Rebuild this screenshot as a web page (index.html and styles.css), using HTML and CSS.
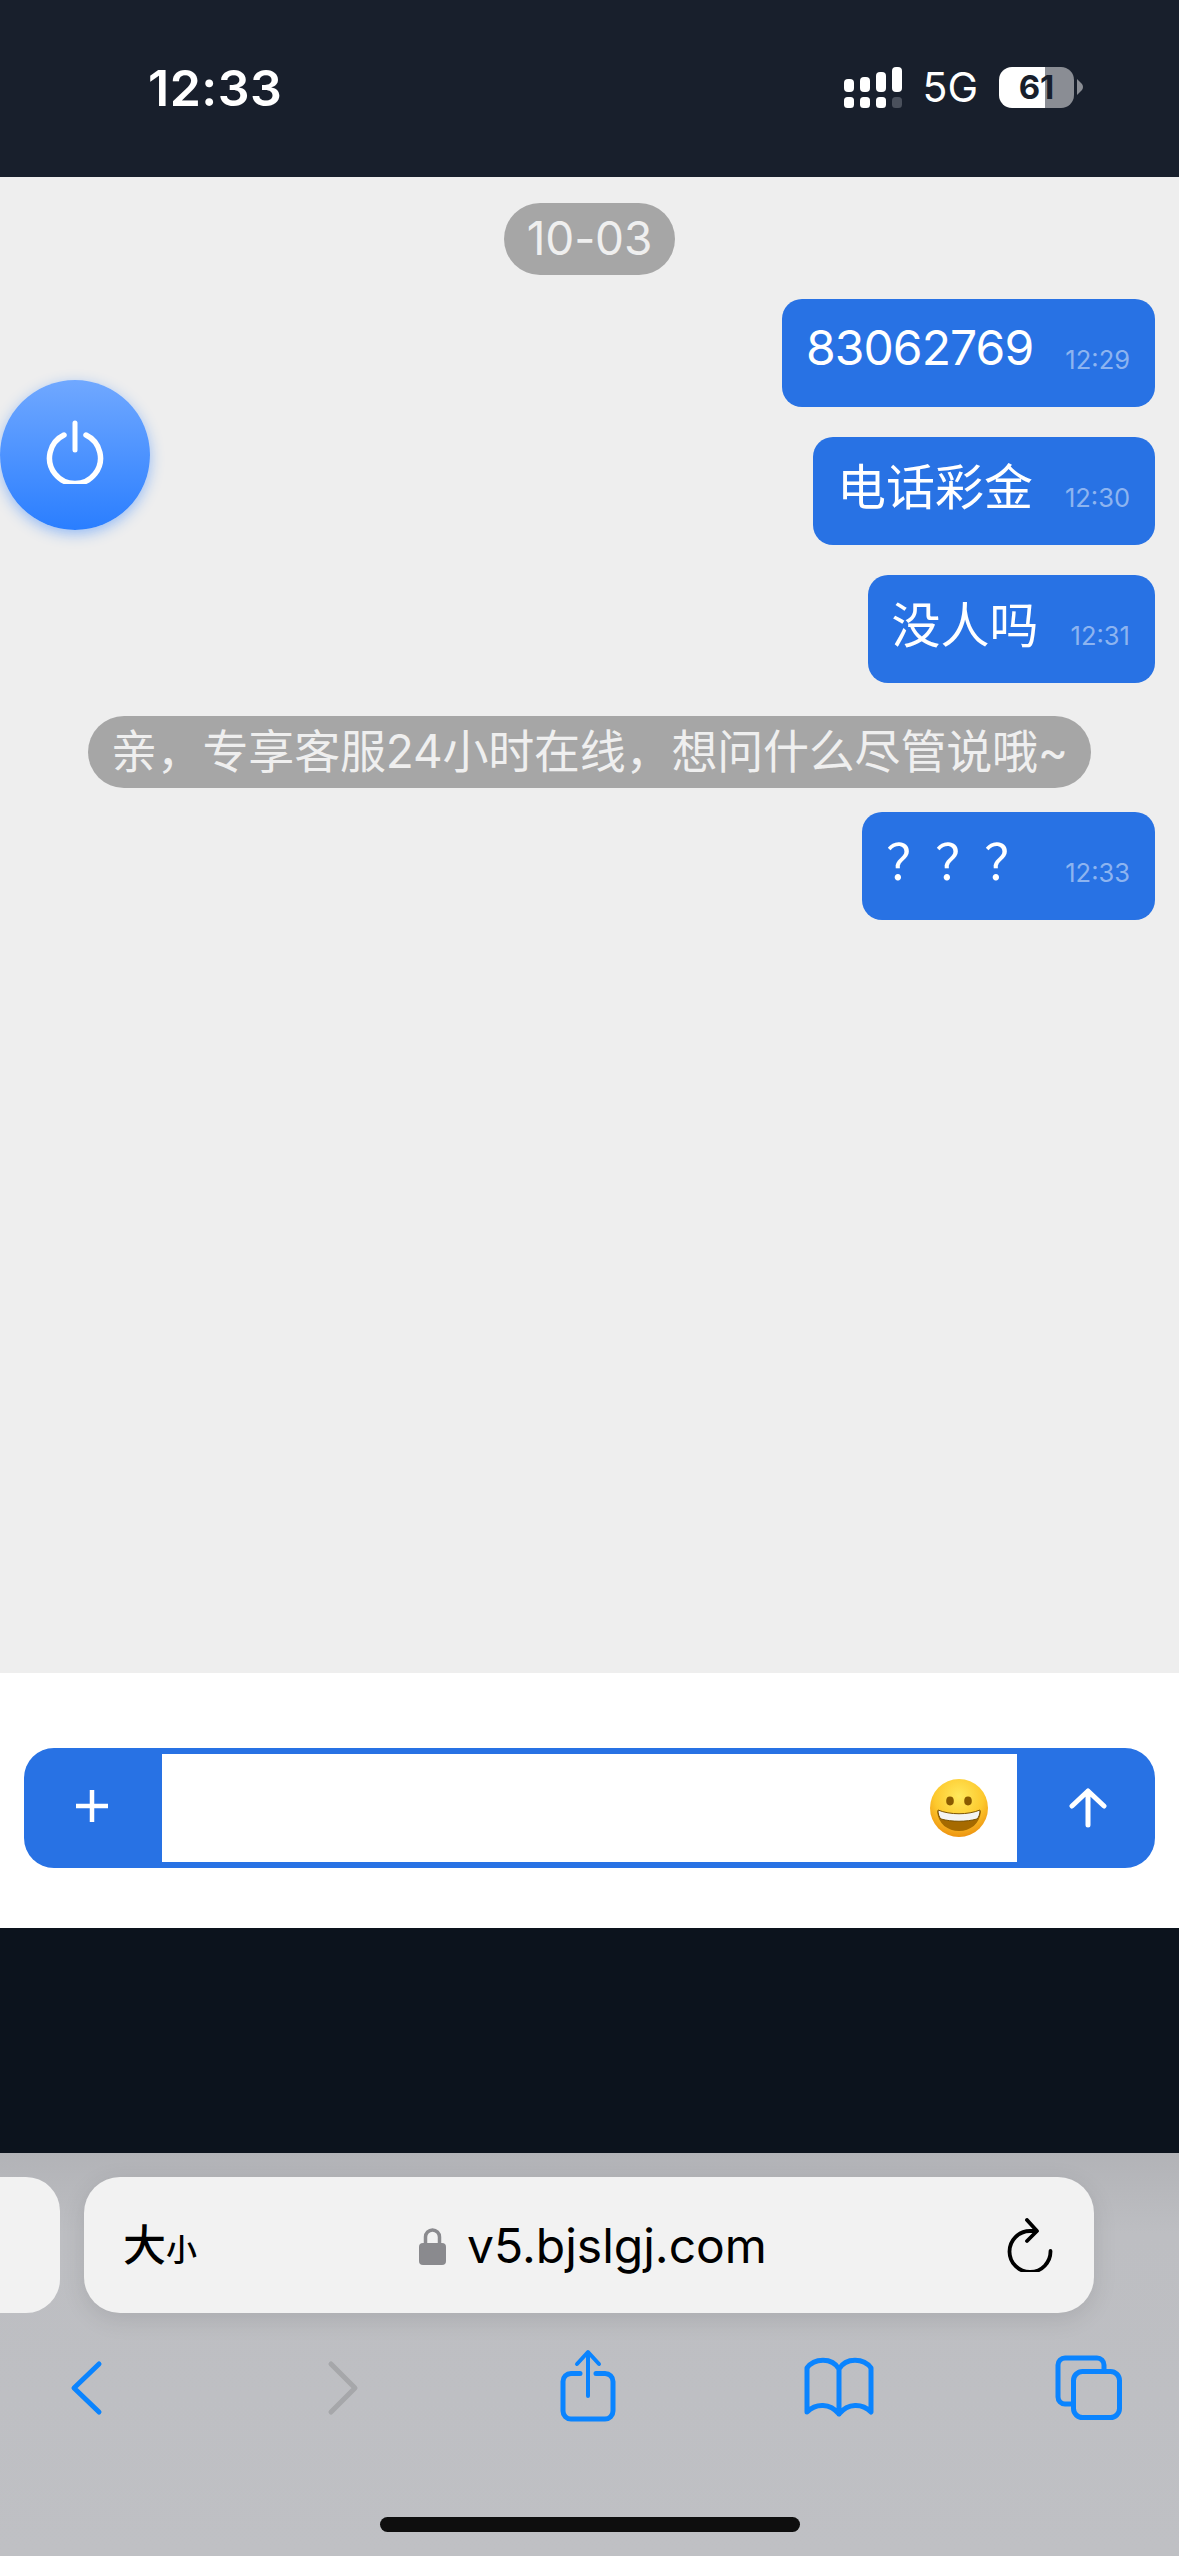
FILE: index.html
```html
<!DOCTYPE html>
<html lang="zh-CN">
<head>
    <meta charset="UTF-8">
    <meta name="viewport" content="width=device-width, initial-scale=1.0">
    <title>客服</title>
    <link rel="stylesheet" href="styles.css">
</head>
<body>
    <div class="status-bar">
        <span class="clock">12:33</span>
        <div class="status-right">
            <svg class="signal" width="58" height="41" viewBox="0 0 58 41">
                <rect x="0" y="12" width="10" height="13" rx="4" fill="#fff"/>
                <rect x="16" y="10" width="10" height="15" rx="4" fill="#fff"/>
                <rect x="32" y="5" width="10" height="20" rx="4" fill="#fff"/>
                <rect x="48" y="0" width="10" height="25" rx="4" fill="#fff"/>
                <rect x="0" y="30" width="10" height="11" rx="3.5" fill="#fff"/>
                <rect x="16" y="30" width="10" height="11" rx="3.5" fill="#fff"/>
                <rect x="32" y="30" width="10" height="11" rx="3.5" fill="#fff"/>
                <rect x="48" y="30" width="10" height="11" rx="3.5" fill="#4a505c"/>
            </svg>
            <span class="network">5G</span>
            <div class="battery"><span class="battery-level">61</span></div>
            <svg class="battery-nub" width="7" height="16" viewBox="0 0 7 16">
                <path d="M0 0 L5 5 Q7 8 5 11 L0 16 Z" fill="#8a8d94"/>
            </svg>
        </div>
    </div>

    <div class="chat">
        <div class="power-btn">
            <svg width="60" height="64" viewBox="0 0 60 64" fill="none" stroke="#fff" stroke-width="5.5" stroke-linecap="round">
                <path d="M19 15 A25.5 25.5 0 1 0 41 15"/>
                <path d="M30 3 V30" stroke-width="5"/>
            </svg>
        </div>
        <div class="notice date">10-03</div>
        <div class="bubble"><span class="bubble-text digits">83062769</span><span class="bubble-time">12:29</span></div>
        <div class="bubble"><span class="bubble-text">电话彩金</span><span class="bubble-time">12:30</span></div>
        <div class="bubble"><span class="bubble-text">没人吗</span><span class="bubble-time">12:31</span></div>
        <div class="notice tip">亲，专享客服24小时在线，想问什么尽管说哦~</div>
        <div class="bubble"><span class="bubble-text">？？？</span><span class="bubble-time">12:33</span></div>
    </div>

    <div class="composer">
        <div class="input-bar">
            <div class="input-btn add-btn">
                <svg width="34" height="34" viewBox="0 0 34 34" stroke="#fff" stroke-width="4.5">
                    <path d="M17 1 V33 M1 17 H33"/>
                </svg>
            </div>
            <div class="input-field">
                <svg width="62" height="62" viewBox="0 0 62 62">
                    <defs>
                        <radialGradient id="face" cx="50%" cy="30%" r="70%">
                            <stop offset="0" stop-color="#ffe95c"/>
                            <stop offset="0.6" stop-color="#fdc92e"/>
                            <stop offset="1" stop-color="#ee9410"/>
                        </radialGradient>
                    </defs>
                    <circle cx="31" cy="31" r="29" fill="url(#face)"/>
                    <ellipse cx="22" cy="24" rx="3.8" ry="4.4" fill="#8a5a00"/>
                    <ellipse cx="40" cy="24" rx="3.8" ry="4.4" fill="#8a5a00"/>
                    <path d="M9 34 C22 39 40 39 53 34 C52 47 42 54 31 54 C20 54 10 47 9 34 Z" fill="#a66a00"/>
                    <path d="M10 33 C22 38 40 38 52 33 C52 37 51 40 49 42 C38 45 24 45 13 42 C11 40 10 37 10 33 Z" fill="#f4f4f4" stroke="#7a5200" stroke-width="1"/>
                </svg>
            </div>
            <div class="input-btn send-btn">
                <svg width="38" height="40" viewBox="0 0 38 40" fill="none" stroke="#fff" stroke-width="5" stroke-linecap="round" stroke-linejoin="round">
                    <path d="M19 37 V3 M3 18 L19 3 L35 18"/>
                </svg>
            </div>
        </div>
    </div>

    <div class="dark-band"></div>

    <div class="safari-bar">
        <div class="address-row">
            <div class="side-tab"></div>
            <div class="address-pill">
                <span class="text-size"><span class="big">大</span><span class="small">小</span></span>
                <div class="address">
                    <svg class="lock" width="27" height="38" viewBox="0 0 27 38">
                        <path d="M6.5 18 V10 a7 7 0 0 1 14 0 V18" fill="none" stroke="#8a8a8e" stroke-width="3.5"/>
                        <rect x="0" y="16" width="27" height="22" rx="4" fill="#8a8a8e"/>
                    </svg>
                    <span class="url">v5.bjslgj.com</span>
                </div>
                <svg class="reload" width="46" height="54" viewBox="0 0 46 54" fill="none" stroke="#000" stroke-width="3.8" stroke-linecap="round" stroke-linejoin="round">
                    <path d="M29 13 H23 A20.5 20.5 0 1 0 43.5 33"/>
                    <path d="M20 2 L30 13 L20 23"/>
                </svg>
            </div>
        </div>
        <div class="toolbar">
            <svg width="70" height="74" viewBox="0 0 70 74" fill="none" stroke="#0a84ff" stroke-width="5" stroke-linecap="round" stroke-linejoin="round">
                <path d="M48 15 L23 39 L48 63"/>
            </svg>
            <svg width="70" height="74" viewBox="0 0 70 74" fill="none" stroke="#a6a7aa" stroke-width="5" stroke-linecap="round" stroke-linejoin="round">
                <path d="M29 15 L53 39 L29 63"/>
            </svg>
            <svg width="70" height="74" viewBox="0 0 70 74" fill="none" stroke="#0a84ff" stroke-width="5" stroke-linecap="round" stroke-linejoin="round">
                <path d="M27 24.5 H18 a8 8 0 0 0 -8 8 V62 a8 8 0 0 0 8 8 H52 a8 8 0 0 0 8 -8 V32.5 a8 8 0 0 0 -8 -8 H43"/>
                <path d="M35 47 V4 M24 15 L35 3 L46 15" stroke-width="4"/>
            </svg>
            <svg width="70" height="74" viewBox="0 0 70 74" fill="none" stroke="#0a84ff" stroke-width="5" stroke-linecap="round" stroke-linejoin="round">
                <path d="M35 20 C28 8 10 9 3 19 V63 C12 54 26 54 35 65 C44 54 58 54 67 63 V19 C60 9 42 8 35 20 V65"/>
            </svg>
            <svg width="70" height="74" viewBox="0 0 70 74" fill="none" stroke="#0a84ff" stroke-width="5" stroke-linecap="round" stroke-linejoin="round">
                <path d="M49 20 V16 a7 7 0 0 0 -7 -7 H10 a7 7 0 0 0 -7 7 V48 a7 7 0 0 0 7 7 H16"/>
                <rect x="18.5" y="22.5" width="46" height="46" rx="9"/>
            </svg>
        </div>
        <div class="home-indicator"></div>
    </div>
</body>
</html>
```

FILE: styles.css
```css
* {
    box-sizing: border-box;
}
html, body {
    margin: 0;
    padding: 0;
}
body {
    width: 1179px;
    height: 2556px;
    overflow: hidden;
    display: flex;
    flex-direction: column;
    font-family: Inter, "Noto Sans CJK SC", sans-serif;
    background-color: #eee;
}

/* status bar */
.status-bar {
    height: 177px;
    flex-shrink: 0;
    background-color: #181f2c;
    color: #fff;
    display: flex;
    justify-content: space-between;
    align-items: flex-start;
    padding: 58px 95px 0 148px;
}
.clock {
    font-size: 50px;
    line-height: 60px;
    font-weight: 600;
    letter-spacing: 0.5px;
}
.status-right {
    display: flex;
    align-items: flex-start;
    padding-top: 9px;
}
.signal {
    display: block;
}
.network {
    font-size: 41px;
    line-height: 41px;
    margin-left: 20px;
    margin-right: 21px;
}
.battery {
    width: 75px;
    height: 41px;
    border-radius: 13px;
    background: linear-gradient(to right, #fff 61%, #8a8d94 61%);
    text-align: center;
    color: #181f2c;
    font-size: 33px;
    font-weight: 700;
    line-height: 41px;
}
.battery-nub {
    display: block;
    margin: 12px 0 0 3px;
}

/* chat */
.chat {
    position: relative;
    height: 1496px;
    flex-shrink: 0;
    background-color: #eee;
    display: flex;
    flex-direction: column;
    align-items: flex-end;
    padding: 26px 24px 0;
}
.power-btn {
    position: absolute;
    left: 0;
    top: 203px;
    width: 150px;
    height: 150px;
    padding-bottom: 6px;
    border-radius: 50%;
    background: linear-gradient(to bottom, #70a8ff, #2a7eff);
    box-shadow: 0 4px 14px rgba(42, 126, 255, 0.45);
    display: flex;
    align-items: center;
    justify-content: center;
}
.notice {
    align-self: center;
    height: 72px;
    line-height: 70px;
    padding: 0 23px;
    border-radius: 36px;
    background-color: #a6a6a6;
    color: #efefef;
    font-size: 46px;
    letter-spacing: -0.2px;
    white-space: nowrap;
}
.date {
    margin-bottom: 24px;
}
.tip {
    margin: 33px 0 24px;
}
.bubble {
    height: 108px;
    margin-bottom: 30px;
    padding: 18px 25px 0 24px;
    display: flex;
    gap: 32px;
    border-radius: 20px;
    background-color: #2872e4;
    color: #fff;
}
.tip + .bubble {
    margin-bottom: 0;
}
.bubble:has(+ .tip) {
    margin-bottom: 0;
}
.bubble-text {
    font-size: 49px;
    line-height: 66px;
}
.digits {
    margin-top: -2px;
    font-size: 48px;
    letter-spacing: -0.9px;
}
.bubble-time {
    font-size: 25.5px;
    line-height: 30px;
    margin-top: 28px;
    color: #8db4f0;
}

/* input area */
.composer {
    height: 255px;
    flex-shrink: 0;
    background-color: #fff;
    padding: 75px 24px 0;
}
.input-bar {
    height: 120px;
    display: flex;
    border-radius: 30px;
    background-color: #2872e4;
}
.input-btn {
    width: 138px;
    flex-shrink: 0;
    display: flex;
    align-items: center;
    justify-content: center;
}
.add-btn {
    padding: 0 3px 4px 0;
}
.send-btn {
    padding-left: 3px;
}
.input-field {
    flex: 1;
    margin: 6px 0;
    background-color: #fff;
    display: flex;
    align-items: center;
    justify-content: flex-end;
    padding-right: 27px;
}
.dark-band {
    height: 225px;
    flex-shrink: 0;
    background-color: #0c131d;
}

/* safari toolbar */
.safari-bar {
    flex: 1;
    background: linear-gradient(to bottom, #b2b3b7, #bdbec2 20%, #bfc0c4);
}
.address-row {
    display: flex;
    gap: 24px;
    padding-top: 24px;
}
.side-tab {
    width: 60px;
    height: 136px;
    background-color: #f2f2f2;
    border-radius: 0 34px 34px 0;
}
.address-pill {
    width: 1010px;
    height: 136px;
    background-color: #f2f2f2;
    border-radius: 36px;
    box-shadow: 0 6px 24px rgba(0, 0, 0, 0.1);
    display: flex;
    align-items: center;
    justify-content: space-between;
    padding: 0 41px 0 39px;
}
.text-size {
    color: #000;
    width: 74px;
    padding-top: 10px;
    line-height: 50px;
    white-space: nowrap;
}
.big {
    font-size: 43px;
    font-weight: 500;
}
.small {
    font-size: 31px;
    font-weight: 500;
}
.address {
    display: flex;
    align-items: center;
    gap: 21px;
    margin-right: 18px;
    padding-top: 2px;
}
.lock {
    display: block;
}
.url {
    font-size: 48px;
    line-height: 60px;
    color: #000;
}
.reload {
    display: block;
}
.toolbar {
    display: flex;
    justify-content: space-between;
    padding: 36px 54px 0 51px;
}
.toolbar svg {
    display: block;
}
.home-indicator {
    width: 420px;
    height: 15px;
    margin: 94px auto 0;
    border-radius: 8px;
    background-color: #0e0e0e;
}
```
